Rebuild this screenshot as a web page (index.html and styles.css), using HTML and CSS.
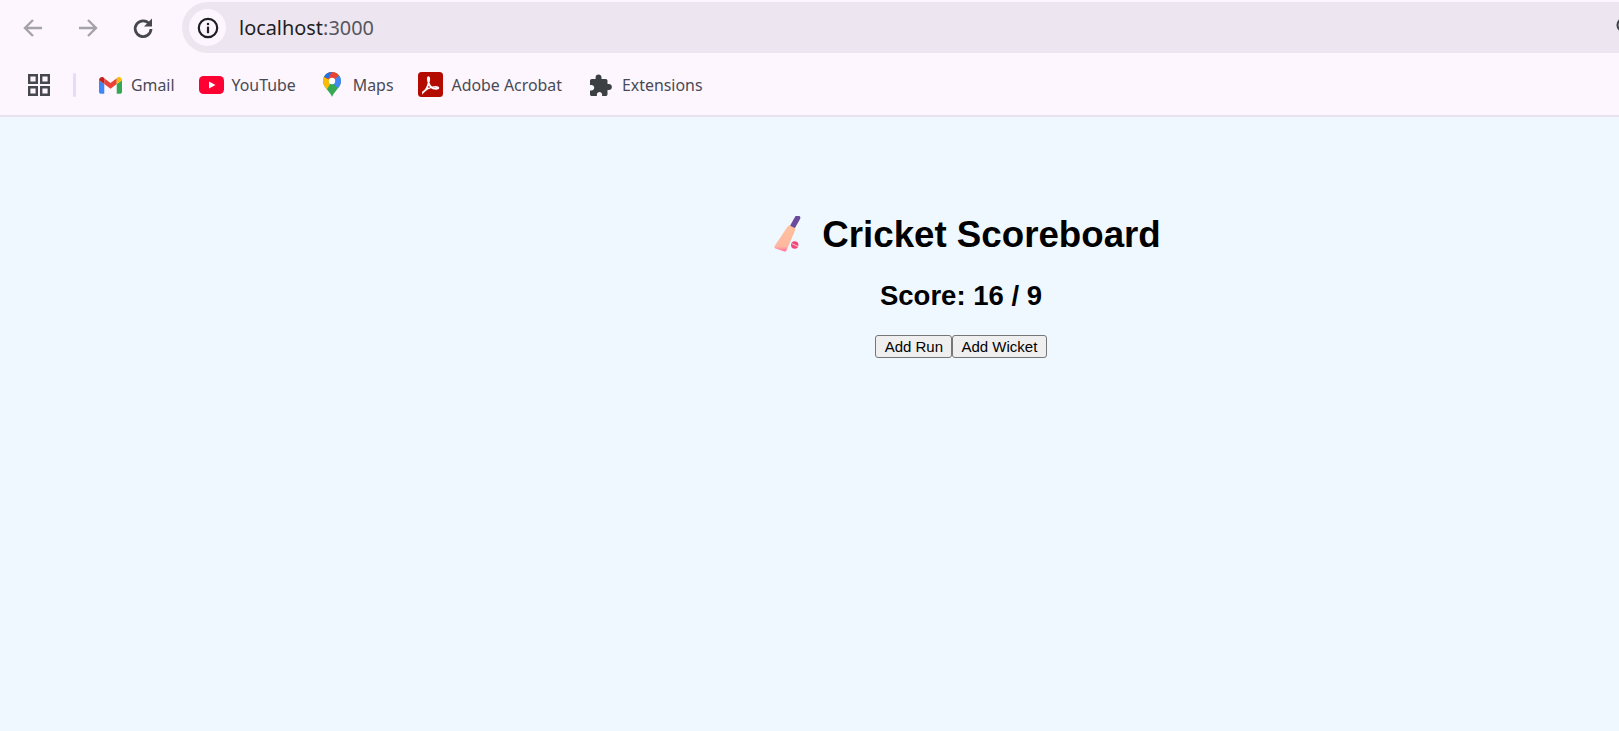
FILE: index.html
```html
<!DOCTYPE html>
<html lang="en">
<head>
    <meta charset="UTF-8">
    <meta name="viewport" content="width=device-width, initial-scale=1.0">
    <title>Cricket Scoreboard</title>
    <link rel="stylesheet" href="styles.css">
</head>
<body>

    <div class="browser">
        <div class="toolbar">
            <svg class="navIcon faded" viewBox="0 0 24 24"><path d="M21 12H4M12 4l-8 8 8 8"/></svg>
            <svg class="navIcon faded" viewBox="0 0 24 24"><path d="M3 12h17M12 4l8 8-8 8"/></svg>
            <svg class="navIcon heavy" viewBox="0 0 24 24"><path d="M18.600 8.200A7.900 7.900 0 1 0 20 13"/><path class="solid" d="M21 2.500v8h-8z"/></svg>
            <div class="addressBar">
                <span class="siteInfo">
                    <svg viewBox="0 0 24 24" width="24" height="24"><circle cx="12" cy="12" r="9.200" fill="none" stroke="#1f1f24" stroke-width="2.200"/><rect x="10.900" y="10.600" width="2.200" height="6.600" fill="#1f1f24"/><rect x="10.900" y="6.900" width="2.200" height="2.200" fill="#1f1f24"/></svg>
                </span>
                <span class="url">localhost<span class="port">:3000</span></span>
                <svg class="searchIcon" viewBox="0 0 24 24" width="24" height="24"><circle cx="10" cy="10" r="6.500" fill="none" stroke="#46464e" stroke-width="2.200"/><path d="M15 15l6 6" stroke="#46464e" stroke-width="2.200"/></svg>
            </div>
        </div>
        <div class="bookmarks">
            <svg class="appsIcon" viewBox="0 0 22 22" width="22" height="22"><path d="M1.200 1.200h7.600v7.600H1.200zM13.200 1.200h7.600v7.600h-7.600zM1.200 13.200h7.600v7.600H1.200zM13.200 13.200h7.600v7.600h-7.600z"/></svg>
            <span class="divider"></span>
            <a class="bookmark">
                <svg viewBox="0 0 24 18" width="23" height="18">
                    <path fill="#4285f4" d="M0 4v12.400C0 17.300.7 18 1.600 18H5.500V8z"/>
                    <path fill="#34a853" d="M24 4v12.400c0 .900-.7 1.600-1.600 1.600h-3.900V8z"/>
                    <path fill="#ea4335" d="M5.500 8V2L12 7l6.500-5v6L12 13z"/>
                    <path fill="#c5221f" d="M0 4c0-3 3.200-4.700 5.500-2.400V8z"/>
                    <path fill="#fbbc04" d="M24 4c0-3-3.200-4.700-5.500-2.400V8z"/>
                </svg>
                Gmail
            </a>
            <a class="bookmark wide tight">
                <svg viewBox="0 0 25 18" width="25" height="18">
                    <rect width="25" height="18" rx="4.500" fill="#ff0033"/>
                    <path fill="#fff" d="M10 5.500l6.500 3.500-6.500 3.500z"/>
                </svg>
                YouTube
            </a>
            <a class="bookmark maps">
                <svg viewBox="0 0 18 25" width="18" height="25">
                    <defs>
                        <clipPath id="pin"><path d="M9 0C4 0 0 4 0 9c0 3.500 2 6 4 8.500 2.200 2.700 4 4.500 5 7.500 1-3 2.800-4.800 5-7.500 2-2.500 4-5 4-8.500C18 4 14 0 9 0z"/></clipPath>
                    </defs>
                    <g clip-path="url(#pin)">
                        <rect width="18" height="25" fill="#34a853"/>
                        <path fill="#fbbc04" d="M0 5h2L9 9 3 19H0z"/>
                        <path fill="#4285f4" d="M18 2L9 9l3.500 5.500L18 17z"/>
                        <path fill="#ea4335" d="M3 0h13l2 2-9 7-8-4z"/>
                        <path fill="#1a73e8" d="M2 0h6.500L5 7 0 4z"/>
                    </g>
                    <circle cx="9" cy="9" r="3.200" fill="#fff"/>
                </svg>
                Maps
            </a>
            <a class="bookmark wide">
                <svg viewBox="0 0 25 25" width="25" height="25">
                    <rect width="25" height="25" rx="3.500" fill="#b30b00"/>
                    <path fill="none" stroke="#fff" stroke-width="1.700" d="M5 20c2.500-1 5-6 6-11 .4-2 .4-4-.5-4s-.9 2-.4 4c1 4 3.500 7 5 7.500 2 .6 5 .5 5.300-.4.300-1-2.400-1.300-4.400-1.100-3.500.3-8 2-11 5.500z"/>
                </svg>
                Adobe Acrobat
            </a>
            <a class="bookmark">
                <svg viewBox="0 0 24 24" width="24" height="24">
                    <path fill="#3c4043" d="M9.500 1.500c1.700 0 3 1.300 3 2.800V6h4.200c1 0 1.800.8 1.800 1.800V11h1.400c1.600 0 3 1.300 3 3s-1.400 3-3 3h-1.400v4.200c0 1-.8 1.800-1.800 1.800h-3.600v-1.500c0-1.400-1.200-2.500-2.600-2.500s-2.600 1.100-2.600 2.500V23H2.800c-1 0-1.800-.8-1.800-1.800v-3.700h1.400c1.500 0 2.800-1.200 2.800-2.800s-1.300-2.700-2.800-2.700H1V7.800C1 6.800 1.800 6 2.800 6h3.800V4.300c0-1.500 1.200-2.800 2.900-2.800z"/>
                </svg>
                Extensions
            </a>
        </div>
    </div>

    <div class="app">
        <h1 class="title">
            <svg class="batIcon" viewBox="0 0 27 37" width="27" height="37">
                <defs>
                    <linearGradient id="blade" x1="0" y1="0" x2="0" y2="1">
                        <stop offset="0" stop-color="#ffc09c"/>
                        <stop offset="0.8" stop-color="#ffb8a0"/>
                        <stop offset="1" stop-color="#ff6f9f"/>
                    </linearGradient>
                </defs>
                <path d="M19 10L23.500 2" stroke="#6b4a9c" stroke-width="5.500" stroke-linecap="round"/>
                <path fill="url(#blade)" d="M15.500 9.500l5.300 2.500c.6.300.8.900.6 1.400L12.500 34.500c-.4.900-1.300 1.300-2.200 1l-8.800-3c-1-.3-1.400-1.300-1-2.200L14 10c.3-.5 1-.8 1.500-.5z"/>
                <circle cx="20.700" cy="29" r="3.700" fill="#f0487a"/>
                <path d="M17.500 27.500l6.500 3" stroke="#ffc4d6" stroke-width="1"/>
            </svg>
            Cricket Scoreboard
        </h1>
        <h2 class="score">Score: 16 / 9</h2>
        <div class="buttons">
            <button class="scoreBtn">Add Run</button><button class="scoreBtn">Add Wicket</button>
        </div>
    </div>

</body>
</html>
```

FILE: styles.css
```css
body {
    margin: 0;
    background-color: #eff7ff;
    font-family: "Liberation Sans", Arial, sans-serif;
    overflow: hidden;
}
.browser {
    background-color: #fdf6fe;
    border-bottom: 2px solid #e9e2ee;
    height: 115px;
    font-family: "Noto Sans", "Open Sans", sans-serif;
}
.toolbar {
    display: flex;
    align-items: center;
    height: 55px;
    padding-left: 21px;
}
.navIcon {
    width: 24px;
    height: 24px;
    margin-right: 31px;
    fill: none;
    stroke: #47474f;
    stroke-width: 2.400;
    flex-shrink: 0;
}
.navIcon .solid {
    fill: #47474f;
    stroke: none;
}
.navIcon.faded {
    stroke: #a5a2ab;
}
.navIcon.heavy {
    stroke-width: 2.800;
}
.addressBar {
    display: flex;
    align-items: center;
    flex: 1;
    height: 51px;
    margin-left: -4px;
    padding-left: 7px;
    background-color: #ede6f1;
    border-radius: 26px 0 0 26px;
    overflow: hidden;
    position: relative;
}
.siteInfo {
    display: flex;
    align-items: center;
    justify-content: center;
    width: 37px;
    height: 37px;
    background-color: #fdf6fe;
    border-radius: 50%;
}
.url {
    margin-left: 13px;
    font-size: 19.900px;
    color: #1f1f24;
}
.port {
    color: #57565e;
}
.searchIcon {
    position: absolute;
    right: -19px;
    top: 13px;
}
.bookmarks {
    display: flex;
    align-items: center;
    height: 59px;
    padding-left: 28px;
}
.appsIcon {
    fill: none;
    stroke: #47474f;
    stroke-width: 2.400;
}
.divider {
    width: 3px;
    height: 24px;
    margin: 0 23px;
    background-color: #e6dcf7;
    border-radius: 2px;
}
.bookmark {
    display: flex;
    align-items: center;
    gap: 9px;
    margin-right: 24px;
    font-size: 15.900px;
    color: #494a55;
}
.bookmark svg {
    flex-shrink: 0;
}
.bookmark.wide {
    margin-right: 27px;
}
.bookmark.tight {
    gap: 8px;
}
.maps {
    gap: 12px;
}
.app {
    padding-left: 303px;
    padding-top: 97px;
    text-align: center;
}
.title {
    display: flex;
    align-items: center;
    justify-content: center;
    gap: 21px;
    margin: 0;
    padding-left: 13px;
    height: 41px;
    font-size: 36.700px;
    font-weight: bold;
    color: #000;
}
.batIcon {
    flex-shrink: 0;
}
.score {
    margin: 25px 0 24px;
    font-size: 27.500px;
    line-height: 31px;
    font-weight: bold;
    color: #000;
}
.buttons {
    display: flex;
    justify-content: center;
}
.scoreBtn {
    height: 23px;
    padding: 1px 8.250px;
    font-family: "Liberation Sans", Arial, sans-serif;
    font-size: 15px;
    color: #000;
    background-color: #efefef;
    border: 1px solid #767676;
    border-radius: 3px;
}
```
